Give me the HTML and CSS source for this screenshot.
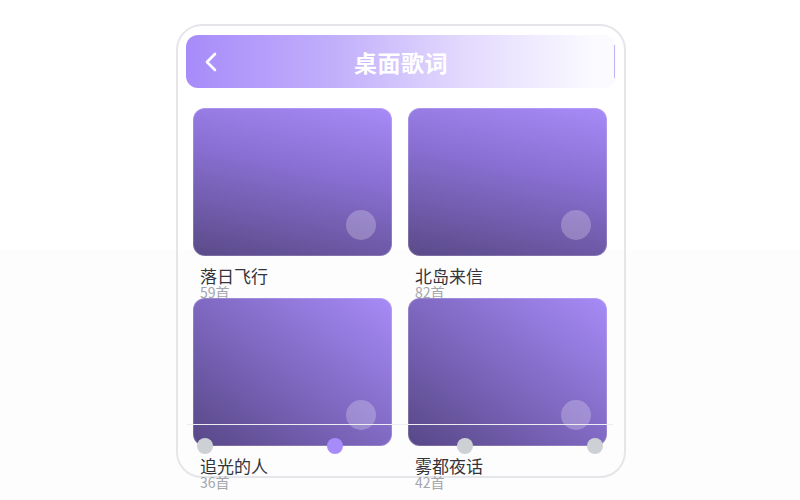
FILE: index.html
```html
<!DOCTYPE html>
<html lang="zh-CN">
<head>
    <meta charset="UTF-8">
    <meta name="viewport" content="width=device-width, initial-scale=1.0">
    <title>桌面歌词</title>
    <link rel="stylesheet" href="styles.css">
</head>
<body>
    <div class="phone">
        <header class="topbar">
            <button class="back" aria-label="返回">
                <svg width="14" height="20" viewBox="0 0 14 20"><path d="M11 2 L3 10 L11 18" fill="none" stroke="#fff" stroke-width="2.6" stroke-linecap="round" stroke-linejoin="round"/></svg>
            </button>
            <h1>桌面歌词</h1>
            <span class="bar-end"></span>
        </header>

        <div class="albums">
            <div class="album">
                <div class="cover cover-a"><span class="play"></span></div>
                <div class="name">落日飞行</div>
                <div class="count">59首</div>
            </div>
            <div class="album">
                <div class="cover cover-a"><span class="play"></span></div>
                <div class="name">北岛来信</div>
                <div class="count">82首</div>
            </div>
            <div class="album">
                <div class="cover cover-b"><span class="play"></span></div>
                <div class="name">追光的人</div>
                <div class="count">36首</div>
            </div>
            <div class="album">
                <div class="cover cover-b"><span class="play"></span></div>
                <div class="name">雾都夜话</div>
                <div class="count">42首</div>
            </div>
        </div>

        <div class="track"></div>
        <div class="dots">
            <span class="dot"></span>
            <span class="dot active"></span>
            <span class="dot"></span>
            <span class="dot"></span>
        </div>
    </div>
</body>
</html>
```

FILE: styles.css
```css
html, body {
    margin: 0;
    padding: 0;
}
body {
    font-family: 'Noto Sans CJK SC', 'Noto Sans', sans-serif;
    background: linear-gradient(#ffffff 250px, #fdfdfe 250px);
    height: 500px;
    overflow: hidden;
}
.phone {
    position: relative;
    width: 450px;
    height: 454px;
    margin: 24px 0 0 176px;
    border: 2px solid #e6e6ea;
    border-radius: 26px;
    padding: 9px 8px 0;
    box-sizing: border-box;
}
.topbar {
    display: grid;
    grid-template-columns: 1fr auto 1fr;
    align-items: center;
    height: 53px;
    padding: 0 18px;
    border-radius: 12px;
    background: linear-gradient(90deg, #a78bfa 0%, #c2b0fb 35%, #e3dafd 65%, #fbfaff 95%);
}
.back {
    justify-self: start;
    border: none;
    background: none;
    padding: 0;
    display: flex;
    cursor: pointer;
}
.topbar h1 {
    margin: 0;
    color: #ffffff;
    font-size: 23px;
    font-weight: 700;
    letter-spacing: 0.5px;
}
.bar-end {
    justify-self: end;
    width: 1px;
    height: 33px;
    background: #c2b2fa;
    margin-right: -17px;
}
.albums {
    display: grid;
    grid-template-columns: 199px 199px;
    column-gap: 16px;
    margin: 20px 0 0 7px;
}
.cover {
    position: relative;
    height: 148px;
    border-radius: 12px;
    box-shadow: inset 0 0 0 1px rgba(255, 255, 255, 0.18);
}
.cover-a {
    background: linear-gradient(192deg, #a78bf7 0%, #8a70d4 40%, #5a4a88 100%);
}
.cover-b {
    background: linear-gradient(to bottom left, #a78bf7 0%, #7f69c2 50%, #574786 100%);
}
.play {
    position: absolute;
    right: 16px;
    bottom: 16px;
    width: 30px;
    height: 30px;
    border-radius: 50%;
    background: rgba(255, 255, 255, 0.24);
}
.name {
    margin: 10px 0 0 7px;
    font-size: 17px;
    line-height: 20px;
    color: #34343a;
}
.count {
    margin-left: 7px;
    font-size: 14px;
    line-height: 12px;
    color: #a3a6ad;
}
.track {
    position: absolute;
    left: 9px;
    top: 398px;
    width: 426px;
    height: 1px;
    background: #eeeef2;
}
.dots {
    position: absolute;
    left: 19px;
    top: 412px;
    display: flex;
    gap: 114px;
}
.dot {
    width: 16px;
    height: 16px;
    border-radius: 50%;
    background: #cdd1d6;
}
.dot.active {
    background: #a78bfa;
}
```
